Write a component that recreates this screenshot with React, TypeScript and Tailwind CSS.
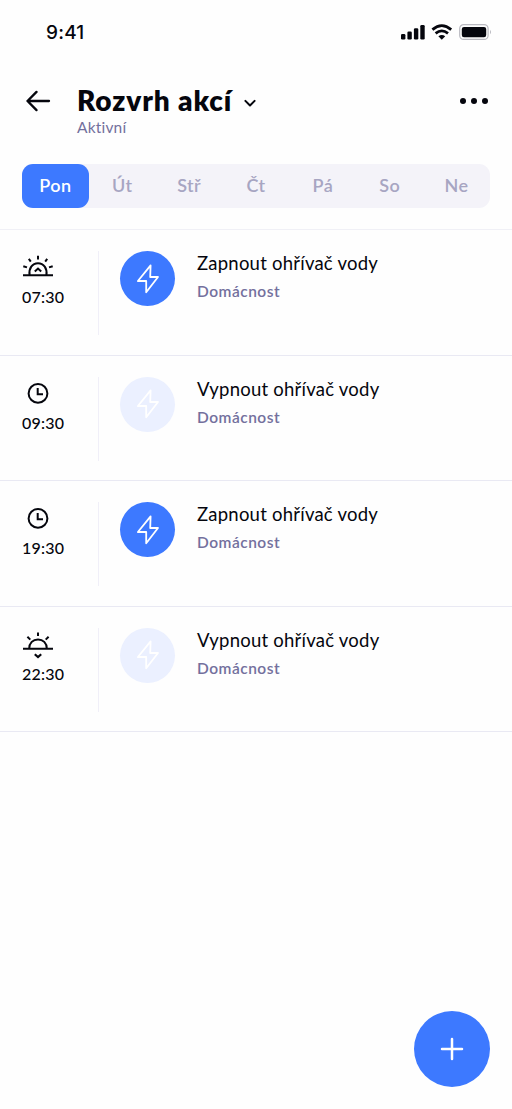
import clsx from "clsx";

const days = ["Pon", "Út", "Stř", "Čt", "Pá", "So", "Ne"];

const actions = [
  { time: "07:30", icon: "sunrise", title: "Zapnout ohřívač vody", active: true },
  { time: "09:30", icon: "clock", title: "Vypnout ohřívač vody", active: false },
  { time: "19:30", icon: "clock", title: "Zapnout ohřívač vody", active: true },
  { time: "22:30", icon: "sunset", title: "Vypnout ohřívač vody", active: false },
];

function StatusBar() {
  return (
    <div className="flex h-16 items-center justify-between pl-[46px] pr-5">
      <span className="pt-px font-[Inter,sans-serif] text-[19px] font-medium leading-6 tracking-[0.2px]">9:41</span>
      <svg width="91" height="18" viewBox="0 0 91 18" fill="none">
        <g fill="#05060d">
          <rect x="0" y="11" width="4.4" height="5.6" rx="1.3" />
          <rect x="6.4" y="8.4" width="4.4" height="8.2" rx="1.3" />
          <rect x="12.9" y="5.2" width="4.4" height="11.4" rx="1.3" />
          <rect x="19.3" y="2" width="4.4" height="14.6" rx="1.3" />
          <path d="M37.4 13.3Q40.8 10.6 44.2 13.3L40.8 16.7Z" />
        </g>
        <path d="M31.4 6.6Q40.8-1.4 50.2 6.6M34.6 10.4Q40.8 5.2 47 10.4" stroke="#05060d" strokeWidth="2.7" />
        <rect x="58.7" y="1.6" width="28.4" height="14.8" rx="4" stroke="#b9b9c0" strokeWidth="1.2" />
        <rect x="60.8" y="3.9" width="24.4" height="10.4" rx="2.2" fill="#05060d" />
        <path d="M89 6.7Q91 9 89 11.3Z" fill="#b9b9c0" />
      </svg>
    </div>
  );
}

function Header() {
  return (
    <header className="flex h-[100px] items-start pl-[26px] pr-6 pt-[21px]">
      <svg className="mt-[5px]" width="25" height="22" viewBox="0 0 25 22" fill="none" stroke="#05060d" strokeWidth="2.3" strokeLinecap="round" strokeLinejoin="round">
        <path d="M23 11H1.5M10.5 1.9L1.5 11L10.5 20.1" />
      </svg>
      <div className="ml-[26px]">
        <div className="flex items-center">
          <h1 className="w-[166px] text-[28px] font-extrabold leading-[30px] tracking-[0.9px] whitespace-nowrap">Rozvrh akcí</h1>
          <svg className="mt-1.5" width="14" height="10" viewBox="0 0 14 10" fill="none" stroke="#05060d" strokeWidth="2" strokeLinecap="round" strokeLinejoin="round">
            <path d="M2.4 2.9L7 7.5L11.6 2.9" />
          </svg>
        </div>
        <p className="mt-0.5 text-[15.5px] leading-5 tracking-[0.2px] text-[#73709d]">Aktivní</p>
      </div>
      <div className="ml-auto mt-[13px] flex gap-[5px]">
        <span className="size-1.5 rounded-full bg-[#05060d]" />
        <span className="size-1.5 rounded-full bg-[#05060d]" />
        <span className="size-1.5 rounded-full bg-[#05060d]" />
      </div>
    </header>
  );
}

function ActionIcon({ name }: { name: string }) {
  if (name === "clock") {
    return (
      <svg width="32" height="28" viewBox="0 0 32 28" fill="none" stroke="#05060d" strokeWidth="2">
        <circle cx="16" cy="12.4" r="9.4" />
        <path d="M15.7 7V13.2H21" />
      </svg>
    );
  }

  return (
    <svg width="32" height="28" viewBox="0 0 32 28" fill="none" stroke="#05060d" strokeWidth="2">
      {name === "sunrise" ? (
        <>
          <path d="M1 20.2H31M7.6 20C6.6 13.5 10.2 8.2 16 8.2S25.4 13.5 24.4 20" />
          <path d="M12.8 16.6L16 13.6L19.2 16.6" />
          <path d="M16 .8V4.5M6.8 3.8L8.8 6.6M25.2 3.8L23.2 6.6M1.3 11.2L5 12.4M30.7 11.2L27 12.4" />
        </>
      ) : (
        <>
          <path d="M1 16.8H31M7.2 16.5C7.2 11 11 7.4 16 7.4S24.8 11 24.8 16.5" />
          <path d="M12.8 22.2L16 25.1L19.2 22.2" strokeWidth="2.2" />
          <path d="M16 .4V4M5.4 4.8L8.3 7.6M26.6 4.8L23.7 7.6" />
        </>
      )}
    </svg>
  );
}

function ActionRow({ action }: { action: (typeof actions)[number] }) {
  return (
    <li className="flex h-[125.5px] border-b-[1.5px] border-[#e9e9f3] pt-[21px]">
      <div className="flex w-[99px] flex-col pl-[22px]">
        <div className="mt-1 h-7">
          <ActionIcon name={action.icon} />
        </div>
        <span className="mt-1 text-[16px] font-medium leading-5 tracking-[0.2px]">{action.time}</span>
      </div>
      <div className="-ml-px h-[84px] w-px bg-[#f0eff8]" />
      <div className={clsx("ml-[21px] flex size-[55px] items-center justify-center rounded-full", action.active ? "bg-[#3d79ff]" : "bg-[#ebf0ff]")}>
        <svg width="24" height="30" viewBox="0 0 24 30" fill="none" stroke="white" strokeWidth="1.8" strokeLinejoin="round">
          <path d="M14.6 1.4L1.9 17H10.2V28.3L22 13H14.2Z" />
        </svg>
      </div>
      <div className="ml-[22px]">
        <h2 className="text-[18.5px] leading-6 tracking-[0.23px] whitespace-nowrap">{action.title}</h2>
        <p className="mt-1 text-[15.5px] font-semibold leading-6 tracking-[0.5px] text-[#73709d]">Domácnost</p>
      </div>
    </li>
  );
}

export default function App() {
  return (
    <div className="flex h-[1109px] w-[512px] flex-col bg-[#fefefe] font-[Lato,sans-serif] text-[#05060d]">
      <StatusBar />
      <Header />
      <div className="px-[22px]">
        <div className="grid h-11 grid-cols-7 rounded-[11px] bg-[#f4f3f9]">
          {days.map((day, index) => (
            <button
              key={day}
              className={clsx(
                "rounded-[11px] pb-0.5 text-[18px] font-semibold tracking-[0.4px]",
                index === 0 ? "bg-[#3d79ff] text-white" : "text-[#a7a5c2]",
              )}
            >
              {day}
            </button>
          ))}
        </div>
      </div>
      <ul className="mt-[21px] border-t-[1.5px] border-[#f0f0f6]">
        {actions.map((action) => (
          <ActionRow key={action.time} action={action} />
        ))}
      </ul>
      <div className="mt-auto flex justify-end pb-[22px] pr-[22px]">
        <button className="flex size-[76px] items-center justify-center rounded-full bg-[#3d79ff]">
          <svg width="24" height="24" viewBox="0 0 24 24" stroke="white" strokeWidth="2.5" strokeLinecap="round">
            <path d="M12 2V22M2 12H22" />
          </svg>
        </button>
      </div>
    </div>
  );
}
